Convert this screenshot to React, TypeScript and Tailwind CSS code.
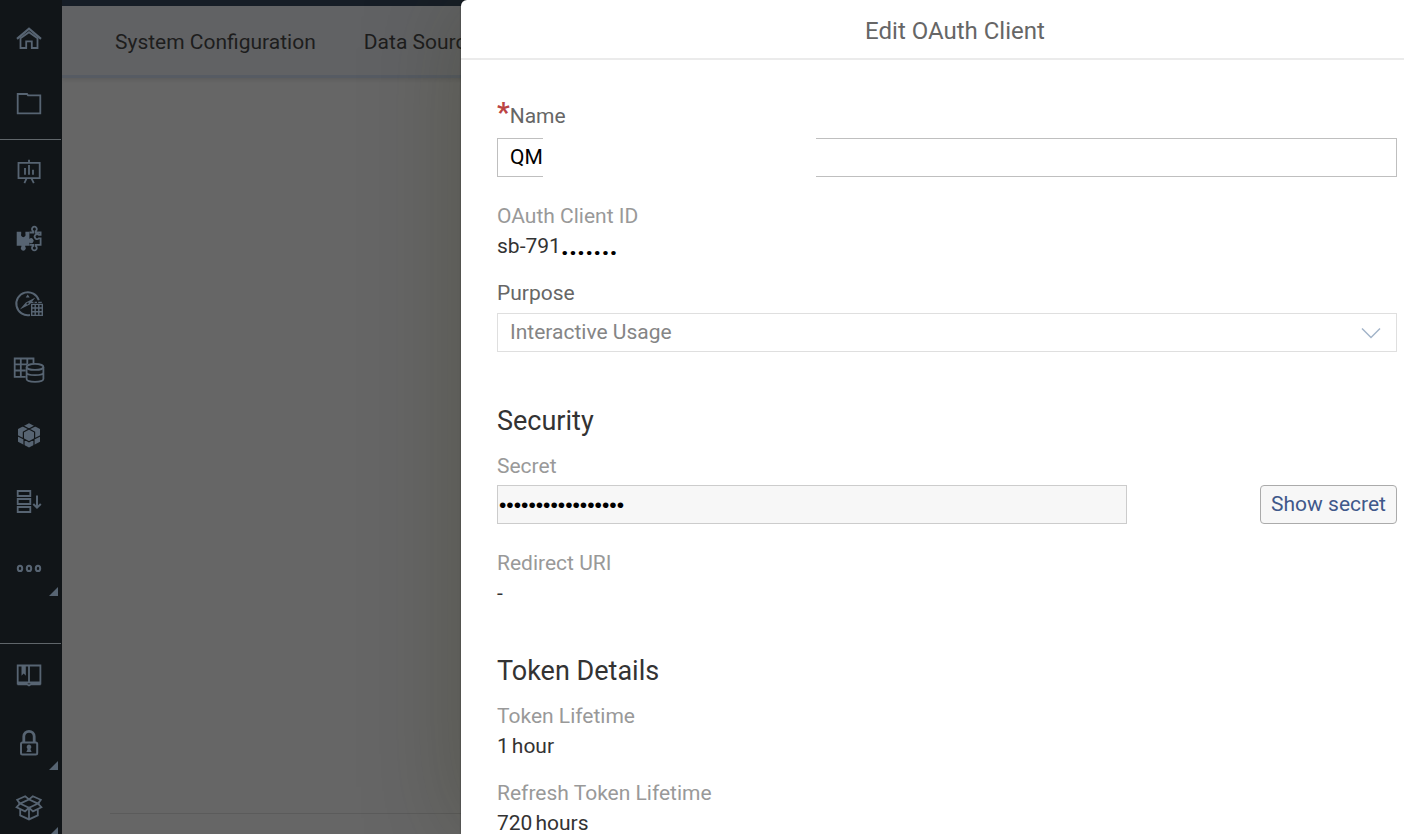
import React from 'react'

const icons: { [key: string]: React.ReactNode } = {
    home: (
        <>
            <path d="M4 16.8 16 6.6 28 16.8" strokeWidth="2.2" />
            <path d="M7.5 16.3V26h5.7v-6.7h5.6V26h5.7v-9.7L16 10.2z" />
        </>
    ),
    files: <path d="M4.7 6H14l1 1.3h12.3v18H4.7z" />,
    stories: (
        <>
            <path d="M5.5 6.8h21.2v15.4H5.5zM16 3.8v3M13.7 22.2l-2.3 5M18.3 22.2l2.5 5" />
            <path d="M12 12v6.8M16 9v9.8M20 13.8v5" />
        </>
    ),
    apps: (
        <>
            <path
                d="M3.7 9.7h4.5v2.2a2.3 2.3 0 1 0 4.2 0V9.7h4v7.2a2.5 2.5 0 1 1 0 3.6v3.3h-4.2v.8a2.5 2.5 0 1 1-3.8 0v-.8H3.7z"
                fill="currentColor"
                stroke="none"
            />
            <path d="M16.5 10.5h3.7V9.2a2.4 2.4 0 1 1 2.4 0v1.3h5v2.4h-1.8a2.4 2.4 0 1 0 0 3.4h1.8v6.6h-5v1a2.4 2.4 0 1 1-2.4 0v-1h-3.7" />
        </>
    ),
    analyzer: (
        <>
            <path d="M25.8 12.3A11.5 11.5 0 1 0 17 27" strokeWidth="2" />
            <path d="M6.8 21.6l6-7.2 9.6-4.8-5.7 7zM14.7 6.5l2 3h-4z" fill="currentColor" stroke="none" />
            <path d="M13.7 16.2l1.8-1.4" className="text-[#111518]" strokeWidth="1.4" />
            <path d="M18 14.4h2.4M21.6 14.4H24M25.2 14.4h3.6" strokeWidth="1.4" />
            <path d="M18.7 16.4h10.6v11H18.7zM18.7 20h10.6M18.7 23.7h10.6M22.2 16.4v11M25.8 16.4v11" strokeWidth="1.4" />
        </>
    ),
    modeler: (
        <>
            <path d="M20.5 9.5V4.5H1.7v18.3h11M1.7 10.4h12.6M1.7 16.5h11M7.8 4.5v18M14.3 4.5V10" />
            <path d="M13.6 12.9v12.2c0 3.6 16.8 3.6 16.8 0V12.9M13.6 18.5c0 3.6 16.8 3.6 16.8 0" />
            <ellipse cx="22" cy="12.9" rx="8.4" ry="3" />
        </>
    ),
    datasets: (
        <>
            <path d="M16 3.2 27 9v12.8L16 27.6 5 21.8V9z" fill="currentColor" stroke="none" />
            <path
                d="M16 9l5.6 3.1v6.6L16 21.8l-5.6-3.1v-6.6zM16 9 9.5 5.6M16 9l6.5-3.4M10.4 18.7 4.5 15.8M21.6 18.7l6-2.9M11 19.3v7M21 19.3v7"
                className="text-[#111518]"
                strokeWidth="1.2"
            />
        </>
    ),
    predict: (
        <>
            <path d="M4.7 5h12.6v5H4.7zM4.7 13h12.6v5H4.7zM4.7 21h12.6v5H4.7z" />
            <path d="M24 9.5v12M20.3 18l3.7 3.7 3.8-3.7" strokeWidth="2" />
        </>
    ),
    more: (
        <g strokeWidth="2">
            <ellipse cx="7" cy="16.4" rx="2.2" ry="2.7" />
            <ellipse cx="16" cy="16.4" rx="2.2" ry="2.7" />
            <ellipse cx="25" cy="16.4" rx="2.2" ry="2.7" />
        </g>
    ),
    catalog: (
        <>
            <path d="M4.7 5.5H16v17H4.7zM16 5.5h11.4v17H16zM4.5 24.3H14l2 1.2 2-1.2h9.7M4.7 22.5v2M27.4 22.5v2" />
            <path d="M8.5 5.5h4.3v10.3l-2.1-2.4-2.2 2.4z" fill="currentColor" stroke="none" />
        </>
    ),
    security: (
        <>
            <rect x="8" y="16.6" width="16.2" height="11.8" rx="1.5" strokeWidth="2" />
            <path d="M10.8 16v-5.5a5.2 5.2 0 0 1 10.4 0V16" strokeWidth="2.8" />
            <path d="M16 18.6a2.4 2.4 0 0 1 1.4 4.3l1.2 3h-5.2l1.2-3a2.4 2.4 0 0 1 1.4-4.3z" fill="currentColor" stroke="none" />
        </>
    ),
    deploy: (
        <>
            <path d="M7 11.6l9-4.2 9 4.2-9 4.2zM7 11.6 4.2 7.8l8-3.6L16 7.4M25 11.6l2.8-3.8-8-3.6L16 7.4" />
            <path d="M7 11.6l-3.4 3.6 8.4 4.2 4-3.6 4 3.6 8.4-4.2L25 11.6M7.2 17.6v5.8l8.8 4 8.8-4v-5.8M16 15.8v11.6" />
        </>
    ),
}

const NavItem = ({ name, expandable }: { name: string; expandable?: boolean }) => (
    <button aria-label={name} className="relative flex h-[66px] w-full shrink-0 items-center justify-center pr-1 pb-0.5">
        <svg
            viewBox="0 0 32 32"
            className="size-8"
            fill="none"
            stroke="currentColor"
            strokeWidth="1.8"
        >
            {icons[name]}
        </svg>
        {expandable && (
            <svg viewBox="0 0 9 9" className="absolute right-1 bottom-1.5 size-[9px]">
                <path d="M9 0v9H0z" fill="currentColor" />
            </svg>
        )}
    </button>
)

const Sidebar = () => (
    <nav className="flex w-[62px] shrink-0 flex-col overflow-hidden bg-[#111518] pt-1.5 text-[#576472]">
        <NavItem name="home" />
        <NavItem name="files" />
        <hr className="mt-px mr-px border-[#60666a]" />
        <NavItem name="stories" />
        <NavItem name="apps" />
        <NavItem name="analyzer" />
        <NavItem name="modeler" />
        <NavItem name="datasets" />
        <NavItem name="predict" />
        <NavItem name="more" expandable />
        <hr className="mt-[41px] mr-px border-[#60666a]" />
        <NavItem name="catalog" />
        <NavItem name="security" expandable />
        <NavItem name="deploy" expandable />
    </nav>
)

const Heading = ({ children }: { children: React.ReactNode }) => (
    <h2 className="mb-3.5 text-[27px] leading-8 text-[#333]">{children}</h2>
)

const Field = ({ label, children }: { label: string; children: React.ReactNode }) => (
    <dl className="leading-[30px]">
        <dt className="text-[#999]">{label}</dt>
        <dd className="flex text-[#333]">{children}</dd>
    </dl>
)

const EditClientDialog = () => (
    <section
        role="dialog"
        aria-labelledby="dialog-title"
        className="absolute inset-y-0 right-0 left-[461px] overflow-hidden rounded-tl-md bg-white text-[21px] shadow-[0_0_2px_rgba(0,0,0,0.4),0_0_100px_rgba(40,40,0,0.26)]"
    >
        <header className="flex h-[60px] items-center justify-center border-b-2 border-[#ebebeb] pt-1 pl-[45px]">
            <h1 id="dialog-title" className="text-2xl text-[#666]">Edit OAuth Client</h1>
        </header>
        <form className="pt-[41px] pr-[7px] pl-9">
            <label htmlFor="name" className="mb-[7px] flex h-[30px] text-[#666] leading-[30px]">
                <span className="text-[28px] leading-6 font-bold text-[#bb4444]">*</span>
                Name
            </label>
            <div className="relative mb-6">
                <input
                    id="name"
                    defaultValue="QM"
                    className="block h-[39px] w-full border border-[#bfbfbf] bg-white px-3 pb-0.5 text-black"
                />
                <div className="absolute inset-y-0 left-[46px] w-[273px] bg-white" />
            </div>

            <Field label="OAuth Client ID">
                sb-791<span className="text-[28px] font-bold text-black">.......</span>
            </Field>

            <label htmlFor="purpose" className="mt-[17px] mb-[5px] block leading-[30px] text-[#666]">Purpose</label>
            <div className="relative mb-[53px]">
                <select
                    id="purpose"
                    disabled
                    className="block h-[39px] w-full appearance-none border border-[#dfdfdf] bg-white px-3 text-[#858585] opacity-100"
                >
                    <option>Interactive Usage</option>
                </select>
                <svg viewBox="0 0 20 12" className="absolute top-3.5 right-4 h-3 w-5" fill="none" stroke="#a3b4c9" strokeWidth="1.5">
                    <path d="M1 1.5 10 10.5 19 1.5" />
                </svg>
            </div>

            <Heading>Security</Heading>
            <label htmlFor="secret" className="mb-1 block leading-[30px] text-[#999]">Secret</label>
            <div className="mb-6 flex items-center justify-between">
                <input
                    id="secret"
                    type="password"
                    readOnly
                    defaultValue="12345678901234567"
                    className="h-[39px] w-[70%] border border-[#ccc] bg-[#f7f7f7] px-px font-['Liberation_Sans',sans-serif] text-black"
                />
                <button type="button" className="h-[39px] w-[137px] rounded border border-[#ababab] bg-[#f7f7f7] text-[#40588a]">
                    Show secret
                </button>
            </div>
            <Field label="Redirect URI">-</Field>

            <div className="h-[47px]" />
            <Heading>Token Details</Heading>
            <Field label="Token Lifetime">
                <span className="mr-[3px]">1</span>hour
            </Field>
            <div className="h-[17px]" />
            <Field label="Refresh Token Lifetime">
                <span className="mr-[3px]">720</span>hours
            </Field>
        </form>
    </section>
)

const App = () => (
    <div className="h-screen bg-white pb-0.5 font-[Roboto,sans-serif]">
        <div className="relative flex h-full overflow-hidden">
            <Sidebar />
            <main className="flex min-w-0 flex-1 flex-col overflow-hidden border-t-[6px] border-[#161d26] bg-[#666]">
                <div className="flex h-[72px] shrink-0 items-center gap-12 border-b-[3px] border-[#565b63] bg-[#616264] px-[53px] pt-1 text-[21px] whitespace-nowrap text-[#1d1d1d] shadow-[0_2px_3px_#5d5d5d]">
                    <a href="#system">System Configuration</a>
                    <a href="#sources">Data Source Configuration</a>
                </div>
                <hr className="mt-auto mb-5 ml-12 border-[#5b5b5b]" />
            </main>
            <EditClientDialog />
        </div>
    </div>
)

export default App
